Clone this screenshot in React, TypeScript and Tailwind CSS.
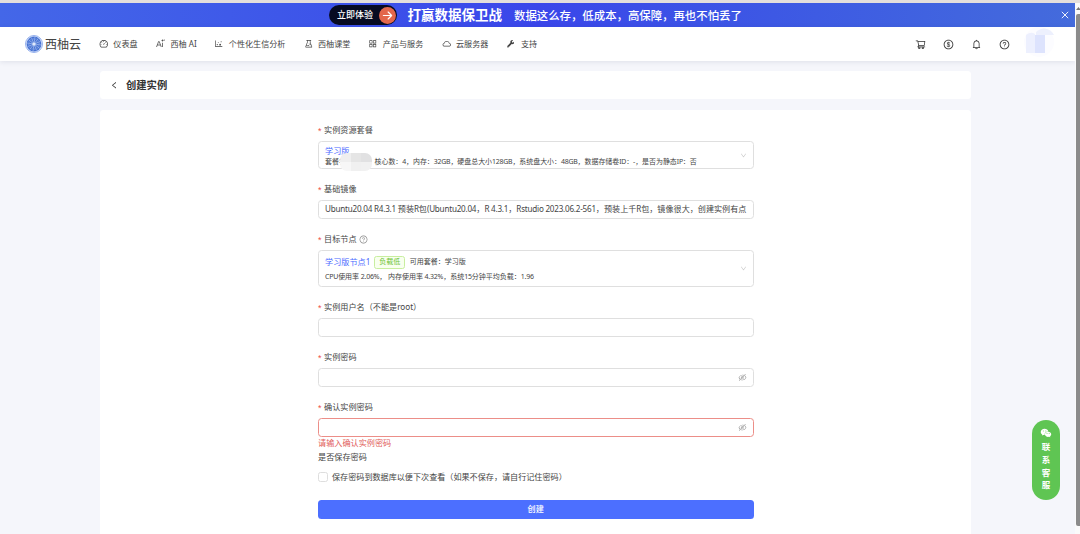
import { useState } from 'react';
import type { ReactNode } from 'react';
import {
  AiFillWechat,
  AiOutlineAppstore,
  AiOutlineBell,
  AiOutlineCloud,
  AiOutlineDashboard,
  AiOutlineDollar,
  AiOutlineDotChart,
  AiOutlineDown,
  AiOutlineExperiment,
  AiOutlineEye,
  AiOutlineEyeInvisible,
  AiOutlineLeft,
  AiOutlineQuestionCircle,
  AiOutlineShoppingCart,
} from 'react-icons/ai';
import { FaWrench } from 'react-icons/fa';

function AiTextIcon() {
  return (
    <svg className="w-[9px] h-[9px]" viewBox="0 0 18 18" fill="none" stroke="currentColor" strokeWidth="1.5">
      <path d="M1 16 5.2 5h1.2l4.2 11M2.6 12h6.4M13 7.5V16M13 1v4M11 3h4M16.5 1v2.5" />
    </svg>
  );
}

const navItems = [
  { label: '仪表盘', icon: <AiOutlineDashboard />, width: 'w-[57.2px]' },
  { label: '西柚 AI', icon: <AiTextIcon />, width: 'w-[58.3px]' },
  { label: '个性化生信分析', icon: <AiOutlineDotChart />, width: 'w-[89.2px]' },
  { label: '西柚课堂', icon: <AiOutlineExperiment />, width: 'w-[64.8px]' },
  { label: '产品与服务', icon: <AiOutlineAppstore />, width: 'w-[73.2px]' },
  { label: '云服务器', icon: <AiOutlineCloud />, width: 'w-[65px]' },
  { label: '支持', icon: <FaWrench className="h-[7.5px] w-[7.5px]" />, width: 'w-[40px]' },
];

function Logo() {
  return (
    <svg className="w-[18px] h-[18px] shrink-0" viewBox="0 0 36 36">
      <circle cx="18" cy="18" r="17" fill="#dfe8fb" stroke="#7fa0e8" strokeWidth="1.6" />
      <circle cx="18" cy="18" r="14.8" fill="#4672d3" />
      {Array.from({ length: 12 }, (_, i) => (
        <path key={i} d="M18 17V4" stroke="#b4c9f3" strokeWidth="1.2" transform={`rotate(${i * 30 + 8} 18 18)`} />
      ))}
      {Array.from({ length: 12 }, (_, i) => (
        <path key={i} d="M18 9V6" stroke="#8facea" strokeWidth="1" transform={`rotate(${i * 30 + 23} 18 18)`} />
      ))}
      <circle cx="18" cy="18" r="3.2" fill="#dfe9fb" />
    </svg>
  );
}

// Tightens the latin and digit runs of a mixed line
function MixedText({ text }: { text: string }) {
  return (
    <>
      {text.split(/([\x20-\x7e]+)/).map((part, i) => (
        <span key={i} className={i % 2 ? 'tracking-[-0.22px]' : ''}>{part}</span>
      ))}
    </>
  );
}

function Banner() {
  return (
    <div className="relative flex h-6 shrink-0 items-center bg-gradient-to-r from-[#4467e8] via-[#3a46ea] to-[#446bdc] pl-[329px] text-white">
      <div className="flex h-5 w-[68px] items-center justify-between rounded-full bg-[#070b22] pl-2 pr-[1.5px]">
        <span className="text-[9px] font-medium">立即体验</span>
        <span className="flex h-[17px] w-[17px] items-center justify-center rounded-full bg-[#e3674c]">
          <svg className="h-[11px] w-[11px]" viewBox="0 0 12 12" fill="none" stroke="white" strokeWidth="1.3" strokeLinecap="round" strokeLinejoin="round">
            <path d="M1.5 6h9M6.7 2.2 10.5 6 6.7 9.8" />
          </svg>
        </span>
      </div>
      <span className="ml-[10.5px] pt-px text-[13.5px] font-bold">打赢数据保卫战</span>
      <span className="ml-[12px] pt-px text-[11.4px] font-medium">数据这么存，低成本，高保障，再也不怕丢了</span>
      <svg className="absolute right-[6px] top-[8px] h-2 w-2" viewBox="0 0 8 8" stroke="white" strokeWidth="0.9">
        <path d="M.8.8l6.4 6.4M7.2.8.8 7.2" />
      </svg>
    </div>
  );
}

function Header() {
  return (
    <header className="relative z-10 flex h-[34px] shrink-0 items-center bg-white pl-[25px] shadow-[0_1px_5px_rgba(30,40,80,0.1)]">
      <Logo />
      <span className="ml-[2px] w-[54px] whitespace-nowrap pt-px text-[12px] text-[#444]">西柚云</span>
      <nav className="flex items-center text-[#444]">
        {navItems.map((item) => (
          <a key={item.label} href="#" className={`flex shrink-0 items-center whitespace-nowrap ${item.width}`}>
            <span className="flex w-[14.3px] text-[9.5px]">{item.icon}</span>
            <span className="text-[8.1px]">{item.label}</span>
          </a>
        ))}
      </nav>
      <div className="ml-auto flex items-center gap-[17px] pr-[20px] text-[11px] text-[#333]">
        <AiOutlineShoppingCart />
        <AiOutlineDollar />
        <AiOutlineBell />
        <AiOutlineQuestionCircle />
        <svg className="-ml-[4px] -mt-[5px] h-[31px] w-[32px]" viewBox="0 0 32 31">
          <circle cx="16" cy="16" r="15" fill="#fcfcff" />
          <path d="M13 6a11 11 0 0 1 18 3H13z" fill="#edf0fd" />
          <path d="M3 9q5-4 9-1v19H3z" fill="#edf0fe" />
          <path d="M12 9h10v18H12z" fill="#dde3fd" />
        </svg>
      </div>
    </header>
  );
}

function Label({ children, required = true }: { children: ReactNode; required?: boolean }) {
  return (
    <div className="flex h-[14px] items-center text-[8.15px] leading-[14px] text-[#444]">
      {required && <span className="w-[6px] font-['Liberation_Sans'] text-[9px] leading-[9px] text-[#ee4e49] pt-[2px]">*</span>}
      {children}
    </div>
  );
}

function PasswordInput({ error = false }: { error?: boolean }) {
  const [visible, setVisible] = useState(false);
  return (
    <div className={`mt-1 flex h-[19px] items-center rounded-[3.5px] border pl-[6px] pr-[5.5px] ${error ? 'border-[#ec8e88]' : 'border-[#dfdfdf]'}`}>
      <input type={visible ? 'text' : 'password'} className="min-w-0 flex-1 text-[8px] outline-none" />
      <button type="button" onClick={() => setVisible(!visible)} className="text-[9px] text-[#999]">
        {visible ? <AiOutlineEye /> : <AiOutlineEyeInvisible />}
      </button>
    </div>
  );
}

function InstanceForm() {
  return (
    <form className="ml-[218px] w-[435.5px] pt-[13px] text-[#444]" onSubmit={(e) => e.preventDefault()}>
      <Label>实例资源套餐</Label>
      <div className="relative mt-1 flex h-[28px] items-center justify-between rounded-[3.5px] border border-[#dfdfdf] pl-[6px] pr-[6px]">
        <div className="whitespace-nowrap">
          <div className="h-[11px] pt-px text-[8.15px] leading-[11px] text-[#4c6bff]">学习版</div>
          <div className="flex h-[12px] items-center pt-px text-[7px] leading-[11px]">
            <span className="w-[49.5px]">套餐名</span>
            <span className="text-[6.94px]"><MixedText text="核心数：4，内存：32GB，硬盘总大小128GB，系统盘大小：48GB，数据存储卷ID：-，是否为静态IP：否" /></span>
          </div>
        </div>
        <AiOutlineDown className="text-[7px] text-[#c4c4c4]" />
        {/* masked plan name */}
        <div className="absolute left-[21px] top-[11px] grid h-[18px] w-[32px] grid-cols-3 overflow-hidden rounded-[7px]">
          <span className="bg-[#efefef]" />
          <span className="bg-[#e5e5e5]" />
          <span className="bg-[#e1e1e2]" />
          <span className="bg-[#f7f7f7]" />
          <span className="bg-[#f0f0f0]" />
          <span className="bg-[#f1f1f1]" />
        </div>
      </div>

      <div className="mt-[13px]">
        <Label>基础镜像</Label>
        <div className="mt-1 flex h-[19px] items-center whitespace-nowrap rounded-[3.5px] border border-[#dfdfdf] pl-[6px] text-[8.1px]">
          <span><MixedText text="Ubuntu20.04 R4.3.1 预装R包(Ubuntu20.04，R 4.3.1，Rstudio 2023.06.2-561，预装上千R包，镜像很大，创建实例有点" /></span>
        </div>
      </div>

      <div className="mt-[13px]">
        <Label>
          目标节点
          <AiOutlineQuestionCircle className="ml-[2.5px] text-[9px] text-[#888]" />
        </Label>
        <div className="mt-1 flex h-[37px] items-center justify-between rounded-[3.5px] border border-[#dfdfdf] pl-[6px] pr-[6px]">
          <div className="whitespace-nowrap">
            <div className="flex h-[14px] items-center">
              <span className="text-[8.15px] text-[#4c6bff]">学习版节点1</span>
              <span className="ml-[4px] flex h-[13px] w-[31px] items-center justify-center rounded-[2.5px] border border-[#c8ee9f] bg-[#f8ffef] text-[7px] text-[#6dc237]">负载低</span>
              <span className="ml-[4.5px] text-[7px]">可用套餐：学习版</span>
            </div>
            <div className="h-[13px] pt-px text-[7px] leading-[13px]">
              <MixedText text="CPU使用率 2.06%， 内存使用率 4.32%，系统15分钟平均负载：1.96" />
            </div>
          </div>
          <AiOutlineDown className="text-[7px] text-[#c4c4c4]" />
        </div>
      </div>

      <div className="mt-[13px]">
        <Label>实例用户名（不能是root）</Label>
        <input className="mt-1 block h-[19px] w-full rounded-[3.5px] border border-[#dfdfdf] px-[6px] text-[8px] outline-none" />
      </div>

      <div className="mt-[13px]">
        <Label>实例密码</Label>
        <PasswordInput />
      </div>

      <div className="mt-[13px]">
        <Label>确认实例密码</Label>
        <PasswordInput error />
        <p className="h-[13px] text-[8.15px] leading-[12px] text-[#df605b]">请输入确认实例密码</p>
      </div>

      <Label required={false}>是否保存密码</Label>
      <label className="mt-[6px] flex h-[14px] items-center text-[8.1px]">
        <input type="checkbox" className="mr-[4px] h-[10px] w-[10px] appearance-none rounded-[2.5px] border border-[#dedede] checked:bg-[#4c6fff]" />
        保存密码到数据库以便下次查看（如果不保存，请自行记住密码）
      </label>

      <button type="submit" className="mt-4 flex h-[19px] w-full items-center justify-center rounded-[3.5px] bg-[#4c6fff] text-[8.15px] font-medium text-white">
        创建
      </button>
    </form>
  );
}

export default function App() {
  return (
    <div className="flex h-[534px] w-[1080px] flex-col overflow-hidden bg-[#f5f6fb] font-['Noto_Sans','Noto_Sans_CJK_SC',sans-serif]">
      <div className="h-[3px] shrink-0 bg-[#e4dfdc]" />
      <div className="flex min-h-0 flex-1">
        <div className="relative flex w-[1075px] flex-col overflow-hidden">
          <Banner />
          <Header />
          <main className="flex min-h-0 flex-1 flex-col gap-[11px] pl-[100px] pt-[10px]">
            <div className="flex h-[28px] w-[871px] shrink-0 items-center rounded-[3.5px] bg-white pl-[10px]">
              <AiOutlineLeft className="text-[8.5px] text-[#333]" />
              <h1 className="ml-[7.5px] pt-[2px] text-[10.3px] font-bold text-[#333]">创建实例</h1>
            </div>
            <div className="w-[871px] flex-1 rounded-t-[3.5px] bg-white">
              <InstanceForm />
            </div>
          </main>

          {/* floating support button */}
          <a href="#" className="absolute left-[1032px] top-[417px] flex h-[80px] w-[28px] flex-col items-center rounded-full bg-[#5fc553] pt-[7px] text-[8.5px] font-bold text-white">
            <AiFillWechat className="mb-[2px] text-[12px]" />
            {['联', '系', '客', '服'].map((c) => (
              <span key={c} className="h-[12.8px] leading-[12.8px]">{c}</span>
            ))}
          </a>
        </div>

        {/* scrollbar */}
        <div className="flex w-[5px] flex-col items-end bg-[#fafafa] pt-[4px]">
          <svg className="h-[3px] w-[4px]" viewBox="0 0 4 3">
            <path d="M0 3 2.5 0 4 2v1z" fill="#777" />
          </svg>
          <div className="mt-[4px] h-[512px] w-[4px] rounded-l-[2px] bg-[#8b8b8b]" />
        </div>
      </div>
    </div>
  );
}
